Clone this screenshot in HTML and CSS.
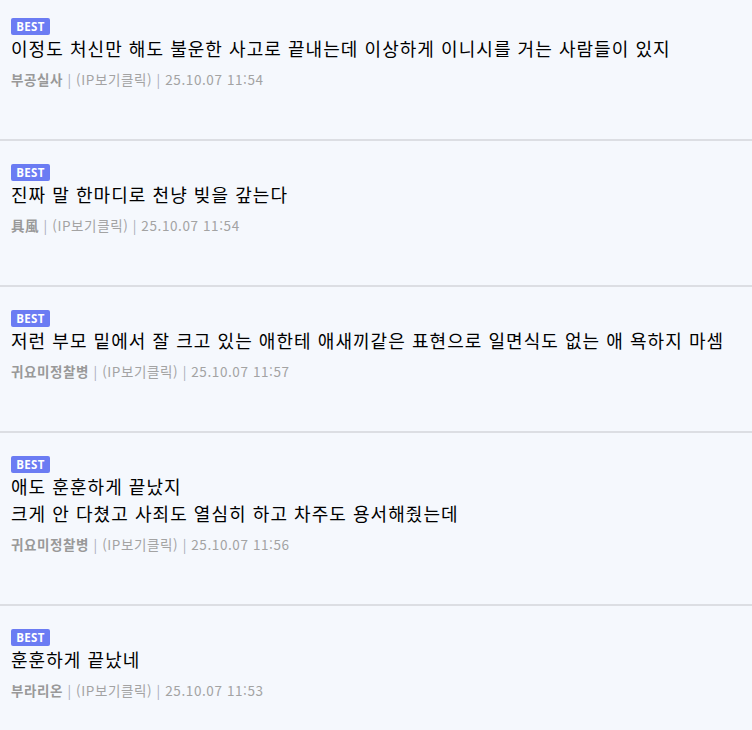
FILE: index.html
```html
<!DOCTYPE html>
<html lang="ko">
<head>
    <meta charset="UTF-8">
    <meta name="viewport" content="width=device-width, initial-scale=1.0">
    <title>베스트 댓글</title>
    <link rel="stylesheet" href="styles.css">
</head>
<body>

    <div class="comment-list">
        <div class="comment">
            <span class="badge">BEST</span>
            <p class="comment-text">이정도 처신만 해도 불운한 사고로 끝내는데 이상하게 이니시를 거는 사람들이 있지</p>
            <div class="meta"><b class="nick">부공실사</b> <span class="bar">|</span> (IP보기클릭) <span class="bar">|</span> 25.10.07 11:54</div>
        </div>
        <div class="comment">
            <span class="badge">BEST</span>
            <p class="comment-text">진짜 말 한마디로 천냥 빚을 갚는다</p>
            <div class="meta"><b class="nick">具風</b> <span class="bar">|</span> (IP보기클릭) <span class="bar">|</span> 25.10.07 11:54</div>
        </div>
        <div class="comment">
            <span class="badge">BEST</span>
            <p class="comment-text">저런 부모 밑에서 잘 크고 있는 애한테 애새끼같은 표현으로 일면식도 없는 애 욕하지 마셈</p>
            <div class="meta"><b class="nick">귀요미정찰병</b> <span class="bar">|</span> (IP보기클릭) <span class="bar">|</span> 25.10.07 11:57</div>
        </div>
        <div class="comment">
            <span class="badge">BEST</span>
            <p class="comment-text">애도 훈훈하게 끝났지<br>크게 안 다쳤고 사죄도 열심히 하고 차주도 용서해줬는데</p>
            <div class="meta"><b class="nick">귀요미정찰병</b> <span class="bar">|</span> (IP보기클릭) <span class="bar">|</span> 25.10.07 11:56</div>
        </div>
        <div class="comment">
            <span class="badge">BEST</span>
            <p class="comment-text">훈훈하게 끝났네</p>
            <div class="meta"><b class="nick">부라리온</b> <span class="bar">|</span> (IP보기클릭) <span class="bar">|</span> 25.10.07 11:53</div>
        </div>
    </div>

</body>
</html>
```

FILE: styles.css
```css
html, body {
    margin: 0;
    padding: 0;
    background: #f5f8fd;
    font-family: "Noto Sans CJK KR", "Noto Sans", sans-serif;
    overflow: hidden;
}

.comment-list {
    margin-top: -5px;
}

.comment {
    padding: 23px 11px 50px;
    border-bottom: 2px solid #dcdee3;
}

.badge {
    display: block;
    width: 39px;
    height: 17px;
    line-height: 17px;
    background: #6b7cf3;
    border-radius: 2px;
    color: #fff;
    font-family: "Open Sans", "Noto Sans", sans-serif;
    font-size: 11.5px;
    font-weight: 700;
    letter-spacing: 0.3px;
    text-align: center;
}

.comment-text {
    margin: 0;
    font-size: 18px;
    line-height: 27px;
    letter-spacing: 1.05px;
    color: #000;
}

.meta {
    margin-top: 7px;
    font-size: 13.5px;
    line-height: 20px;
    letter-spacing: 0.6px;
    color: #a3a3a3;
}

.nick {
    color: #999;
    font-weight: 700;
}

.bar {
    color: #a9adb8;
}
```
